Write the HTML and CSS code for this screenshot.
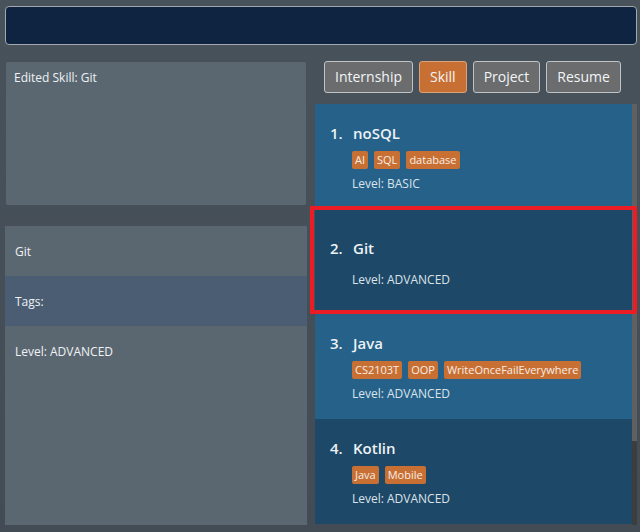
FILE: index.html
```html
<!DOCTYPE html>
<html>
<head>
<meta charset="utf-8">
<link rel="stylesheet" href="styles.css">
</head>
<body>
<div class="app">
  <div class="command"></div>
  <div class="main">
    <div class="left">
      <div class="result">Edited Skill: Git</div>
      <div class="detail">
        <div class="row">Git</div>
        <div class="row row-alt">Tags:</div>
        <div class="row">Level: ADVANCED</div>
      </div>
    </div>
    <div class="right">
      <div class="tabs">
        <div class="tab">Internship</div>
        <div class="tab tab-active">Skill</div>
        <div class="tab">Project</div>
        <div class="tab">Resume</div>
      </div>
      <div class="listwrap">
        <div class="list">
          <div class="card card-light">
            <div class="title"><span class="num">1.</span><span>noSQL</span></div>
            <div class="tags"><span class="tag">AI</span><span class="tag">SQL</span><span class="tag">database</span></div>
            <div class="level">Level: BASIC</div>
          </div>
          <div class="card card-dark">
            <div class="title"><span class="num">2.</span><span>Git</span></div>
            <div class="level">Level: ADVANCED</div>
          </div>
          <div class="card card-light">
            <div class="title"><span class="num">3.</span><span>Java</span></div>
            <div class="tags"><span class="tag">CS2103T</span><span class="tag">OOP</span><span class="tag">WriteOnceFailEverywhere</span></div>
            <div class="level">Level: ADVANCED</div>
          </div>
          <div class="card card-dark">
            <div class="title"><span class="num">4.</span><span>Kotlin</span></div>
            <div class="tags"><span class="tag">Java</span><span class="tag">Mobile</span></div>
            <div class="level">Level: ADVANCED</div>
          </div>
        </div>
        <div class="scrollbar"><div class="thumb"></div></div>
      </div>
    </div>
  </div>
  <div class="highlight"></div>
</div>
</body>
</html>
```

FILE: styles.css
```css
html, body {
  margin: 0;
  padding: 0;
}
body {
  width: 640px;
  height: 532px;
  overflow: hidden;
  background: linear-gradient(180deg, #48525b 0%, #434c55 100%);
  font-family: "Open Sans", "Noto Sans", sans-serif;
  color: #eef2f5;
}
.app {
  position: relative;
  padding: 6px 3px 0 5px;
}
.command {
  height: 37px;
  background: #0f2440;
  border: 1px solid #a3a8ad;
  border-radius: 4px;
}
.main {
  display: flex;
  margin-top: 16px;
}
.left {
  width: 302px;
  display: flex;
  flex-direction: column;
}
.result {
  margin: 1px 1px 0 1px;
  height: 143px;
  background: #5b6770;
  border-radius: 2px;
  font-size: 12px;
  padding: 8px 8px;
  box-sizing: border-box;
  line-height: 16px;
}
.detail {
  margin-top: 21px;
  height: 299px;
  background: #5b6770;
}
.row {
  height: 50px;
  display: flex;
  align-items: center;
  padding-left: 10px;
  font-size: 12px;
}
.row-alt {
  background: #4b5d72;
}
.right {
  margin-left: 8px;
  width: 322px;
}
.tabs {
  display: flex;
  gap: 6px;
  padding-left: 9px;
  height: 32px;
}
.tab {
  height: 32px;
  box-sizing: border-box;
  padding: 0 10px 1px;
  display: flex;
  align-items: center;
  background: #6b6c6d;
  border: 1px solid #bfc3c6;
  border-radius: 3px;
  font-size: 14px;
  color: #f2f5f8;
}
.tab-active {
  background: #c87033;
  border-color: #d9a27c;
}
.listwrap {
  margin-top: 11px;
  display: flex;
  height: 421px;
}
.list {
  width: 317px;
  display: flex;
  flex-direction: column;
}
.card {
  height: 105px;
  box-sizing: border-box;
  padding: 2px 0 0 15px;
  display: flex;
  flex-direction: column;
  justify-content: center;
}
.card-light {
  background: #256189;
}
.card-dark {
  background: #1e4867;
}
.title {
  font-size: 15px;
  font-weight: 600;
  line-height: 20px;
  display: flex;
  color: #edf2f6;
}
.num {
  width: 23px;
}
.tags {
  display: flex;
  gap: 6px;
  margin: 8px 0 0 22px;
}
.tag {
  background: #c87033;
  border-radius: 2px;
  font-size: 11px;
  line-height: 18px;
  padding: 0 3px;
  color: #f7ede6;
}
.level {
  margin: 7px 0 0 22px;
  font-size: 12px;
  line-height: 16px;
  color: #dbe3ea;
}
.card-dark .title + .level {
  margin-top: 14px;
}
.scrollbar {
  width: 5px;
  background: #3b3d3f;
}
.thumb {
  height: 337px;
  background: #5f6062;
}
.highlight {
  position: absolute;
  left: 310px;
  top: 206px;
  width: 327px;
  height: 108px;
  box-sizing: border-box;
  border: 4px solid #ec1c24;
}
```
